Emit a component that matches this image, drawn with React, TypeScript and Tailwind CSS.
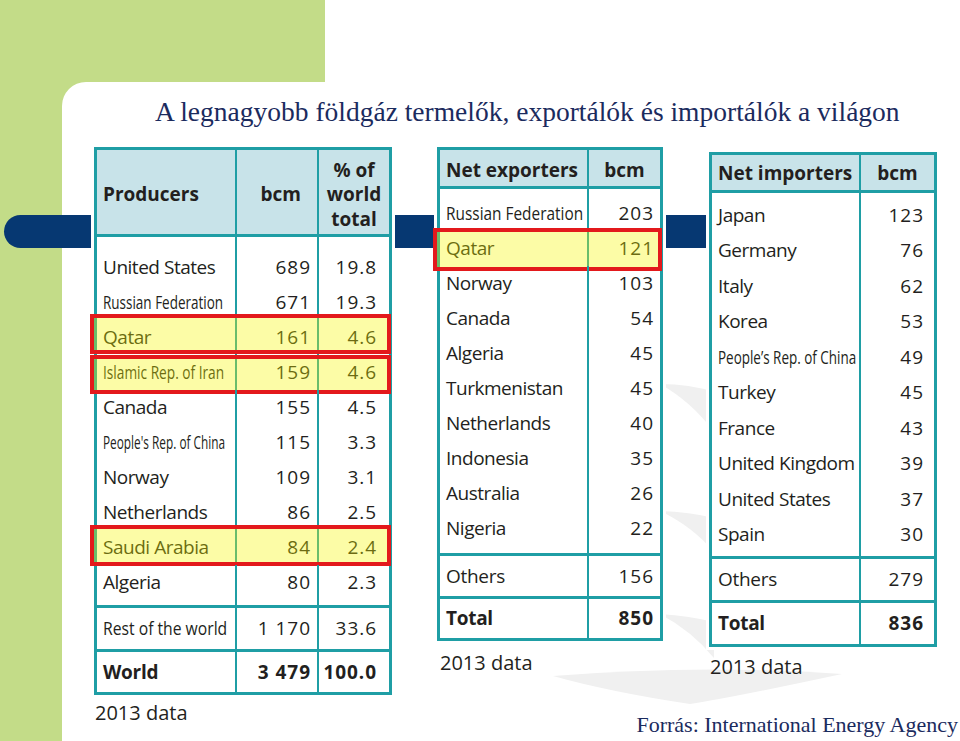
import React, { useLayoutEffect, useRef, useState } from "react";

function Fit({ w, children }: { w: number; children: React.ReactNode }) {
  const ref = useRef<HTMLSpanElement>(null);
  const [s, setS] = useState(1);
  useLayoutEffect(() => {
    const m = () => {
      const el = ref.current;
      if (!el) return;
      const nw = el.offsetWidth;
      if (nw > 0) setS(w / nw);
    };
    m();
    if (typeof document !== "undefined" && (document as any).fonts) {
      (document as any).fonts.ready.then(m);
    }
  }, [w]);
  return (
    <span
      ref={ref}
      className="inline-block whitespace-nowrap origin-left tracking-normal"
      style={{ transform: `scaleX(${s})` }}
    >
      {children}
    </span>
  );
}

type Row = { cells: React.ReactNode[]; hl?: string };
type HeadCell = { node: React.ReactNode; cls: string };
type Foot = { h: string; cells: React.ReactNode[]; bold?: boolean };

function C({
  last,
  children,
  className = "",
}: {
  last: boolean;
  children?: React.ReactNode;
  className?: string;
}) {
  return (
    <div
      className={`${last ? "" : "border-r-2 border-[#1f9ea5]"} flex items-center whitespace-nowrap ${className}`}
    >
      {children}
    </div>
  );
}

function Table({
  width,
  grid,
  headerH,
  header,
  rows,
  rowH,
  padT,
  padB,
  foots,
  pads,
}: {
  width: string;
  grid: string;
  headerH: string;
  header: HeadCell[];
  rows: Row[];
  rowH: string;
  padT: string;
  padB: string;
  foots: Foot[];
  pads: string[];
}) {
  const n = pads.length;
  const spacer = (h: string) => (
    <div className={`grid ${grid} ${h}`}>
      {pads.map((_, i) => (
        <C key={i} last={i === n - 1} />
      ))}
    </div>
  );
  return (
    <div
      className={`relative z-10 ${width} border-[3px] border-[#1f9ea5] bg-white shadow-[0_0_0_3px_#ffffff]`}
    >
      <div className={`grid ${grid} ${headerH} bg-[#c8e3e9] font-bold`}>
        {header.map((h, i) => (
          <C key={i} last={i === n - 1} className={h.cls}>
            {h.node}
          </C>
        ))}
      </div>
      <div className="border-t-[3px] border-[#1f9ea5]">
        {spacer(padT)}
        {rows.map((r, ri) => (
          <div key={ri} className={`relative grid ${grid} ${rowH}`}>
            {r.cells.map((c, i) => (
              <C
                key={i}
                last={i === n - 1}
                className={
                  i === 0
                    ? "pl-[6px] tracking-[-0.025em]"
                    : `justify-end tracking-[0.05em] ${pads[i]}`
                }
              >
                {c}
              </C>
            ))}
            {r.hl && (
              <div
                className={`absolute ${r.hl} border-4 border-[#e3191c] bg-[#f5f500]/35`}
              />
            )}
          </div>
        ))}
        {spacer(padB)}
      </div>
      {foots.map((f, fi) => (
        <div
          key={fi}
          className={`grid ${grid} ${f.h} border-t-[3px] border-[#1f9ea5] ${f.bold ? "font-bold" : ""}`}
        >
          {f.cells.map((c, i) => (
            <C
              key={i}
              last={i === n - 1}
              className={
                i === 0
                  ? "pl-[6px] tracking-[-0.015em]"
                  : `justify-end tracking-[0.05em] ${pads[i]}`
              }
            >
              {c}
            </C>
          ))}
        </div>
      ))}
    </div>
  );
}

const t1Rows: Row[] = [
  { cells: ["United States", "689", "19.8"] },
  { cells: [<Fit w={120}>Russian Federation</Fit>, "671", "19.3"] },
  {
    cells: ["Qatar", "161", "4.6"],
    hl: "top-[-6px] bottom-[1px] left-[-7px] right-[-2px]",
  },
  {
    cells: [<Fit w={121}>Islamic Rep. of Iran</Fit>, "159", "4.6"],
    hl: "top-[0px] bottom-[-4px] left-[-7px] right-[-2px]",
  },
  { cells: ["Canada", "155", "4.5"] },
  { cells: [<Fit w={122}>People's Rep. of China</Fit>, "115", "3.3"] },
  { cells: ["Norway", "109", "3.1"] },
  { cells: ["Netherlands", "86", "2.5"] },
  {
    cells: ["Saudi Arabia", "84", "2.4"],
    hl: "top-[-5px] bottom-[-1px] left-[-7px] right-[-2px]",
  },
  { cells: ["Algeria", "80", "2.3"] },
];

const t2Rows: Row[] = [
  { cells: [<Fit w={137}>Russian Federation</Fit>, "203"] },
  {
    cells: ["Qatar", "121"],
    hl: "top-[-3px] bottom-[-5px] left-[-7px] right-[-2px]",
  },
  { cells: ["Norway", "103"] },
  { cells: ["Canada", "54"] },
  { cells: ["Algeria", "45"] },
  { cells: ["Turkmenistan", "45"] },
  { cells: ["Netherlands", "40"] },
  { cells: ["Indonesia", "35"] },
  { cells: ["Australia", "26"] },
  { cells: ["Nigeria", "22"] },
];

const t3Rows: Row[] = [
  { cells: ["Japan", "123"] },
  { cells: ["Germany", "76"] },
  { cells: ["Italy", "62"] },
  { cells: ["Korea", "53"] },
  { cells: [<Fit w={138}>People’s Rep. of China</Fit>, "49"] },
  { cells: ["Turkey", "45"] },
  { cells: ["France", "43"] },
  { cells: ["United Kingdom", "39"] },
  { cells: ["United States", "37"] },
  { cells: ["Spain", "30"] },
];

export default function App() {
  return (
    <div className="relative w-[960px] h-[741px] overflow-hidden bg-white flex flex-col font-['Open_Sans',sans-serif] text-[19px] text-[#231f20]">
      <div className="flex h-[82px] shrink-0">
        <div className="w-[325px] bg-[#c3dc88]" />
        <div className="flex-1 bg-white" />
      </div>
      <div className="flex flex-1 bg-[#c3dc88]">
        <div className="w-[62px] shrink-0" />
        <div className="relative isolate flex-1 bg-white rounded-tl-[24px] flex flex-col">
          <svg
            className="absolute left-[-62px] top-[-82px] -z-10"
            width="960"
            height="741"
            viewBox="0 0 960 741"
          >
            <g fill="#f0f0f0">
              <path d="M 660 384 Q 690 384 714 392 L 714 432 Q 692 402 660 384 Z" />
              <path d="M 660 511 Q 690 512 714 518 L 714 552 Q 692 526 660 511 Z" />
              <path d="M 660 614 Q 690 616 714 622 L 714 658 Q 692 631 660 614 Z" />
              <path d="M 553 676 Q 700 664 842 674 Q 730 698 690 704 Q 610 692 553 676 Z" />
            </g>
          </svg>
          <div className="absolute left-[-58px] top-[133px] h-[33px] w-[796px] rounded-l-full bg-[#063872]" />

          <div className="pl-[93px] pt-[14px] leading-[31px] whitespace-nowrap font-['Liberation_Serif',serif] text-[27.5px] text-[#1b2b5e]">
            A legnagyobb földgáz termelők, exportálók és importálók a világon
          </div>

          <div className="flex flex-1 mt-[20px] min-h-0">
            <div className="ml-[32px] flex flex-col">
              <Table
                width="w-[298px]"
                grid="grid-cols-[140px_82px_70px]"
                headerH="h-[84px]"
                header={[
                  { node: "Producers", cls: "pl-[6px] pt-[5px]" },
                  { node: "bcm", cls: "justify-end pr-[16px] pt-[5px]" },
                  {
                    node: (
                      <div className="text-center leading-[24.5px]">
                        % of
                        <br />
                        world
                        <br />
                        total
                      </div>
                    ),
                    cls: "justify-center pt-[5px]",
                  },
                ]}
                rows={t1Rows}
                rowH="h-[35px]"
                padT="h-[13px]"
                padB="h-[5px]"
                pads={["", "pr-[6px]", "pr-[12px]"]}
                foots={[
                  { h: "h-[44px]", cells: [<Fit w={124}>Rest of the world</Fit>, "1 170", "33.6"] },
                  { h: "h-[43px]", cells: ["World", "3 479", "100.0"], bold: true },
                ]}
              />
              <div className="ml-[1px] mt-[6px] text-[20px] leading-[24px]">2013 data</div>
            </div>

            <div className="ml-[45px] flex-1 flex flex-col pr-[2px] pb-[4px]">
              <div className="flex items-start">
                <div className="flex flex-col">
                  <Table
                    width="w-[226px]"
                    grid="grid-cols-[149px_71px]"
                    headerH="h-[36px]"
                    header={[
                      { node: "Net exporters", cls: "pl-[6px] pt-[4px]" },
                      { node: "bcm", cls: "justify-center pt-[4px]" },
                    ]}
                    rows={t2Rows}
                    rowH="h-[35px]"
                    padT="h-[7px]"
                    padB="h-[7px]"
                    pads={["", "pr-[6px]"]}
                    foots={[
                      { h: "h-[43px]", cells: ["Others", "156"] },
                      { h: "h-[42px]", cells: ["Total", "850"], bold: true },
                    ]}
                  />
                  <div className="ml-[3px] mt-[10px] text-[20px] leading-[24px]">2013 data</div>
                </div>
                <div className="ml-[46px] mt-[5px] flex flex-col">
                  <Table
                    width="w-[228px]"
                    grid="grid-cols-[149px_73px]"
                    headerH="h-[35px]"
                    header={[
                      { node: "Net importers", cls: "pl-[6px] pt-[2px]" },
                      { node: "bcm", cls: "justify-center pt-[2px]" },
                    ]}
                    rows={t3Rows}
                    rowH="h-[35.5px]"
                    padT="h-[4px]"
                    padB="h-[4px]"
                    pads={["", "pr-[10px]"]}
                    foots={[
                      { h: "h-[44px]", cells: ["Others", "279"] },
                      { h: "h-[44px]", cells: ["Total", "836"], bold: true },
                    ]}
                  />
                  <div className="ml-[1px] mt-[8px] text-[20px] leading-[24px]">2013 data</div>
                </div>
              </div>
              <div className="mt-auto self-end whitespace-nowrap font-['Liberation_Serif',serif] text-[22px] leading-[24px] text-[#1b2b5e]">
                Forrás: International Energy Agency
              </div>
            </div>
          </div>
        </div>
      </div>
    </div>
  );
}
